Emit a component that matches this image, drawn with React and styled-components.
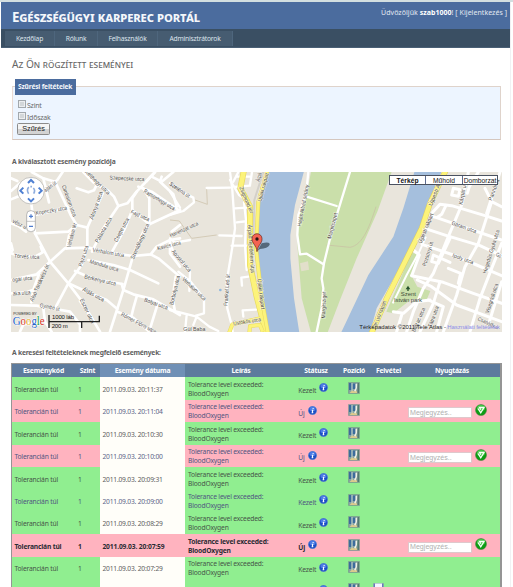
import React from "react";
import styled, { createGlobalStyle, css } from "styled-components";

const Global = createGlobalStyle`
  * { box-sizing: border-box; }
  html, body { margin: 0; height: 587px; overflow: hidden; background: #fff; }
  body { font-family: "Noto Sans", "Open Sans", sans-serif; font-size: 6.7px; color: #5c5c5c; }
`;

const Page = styled.div`
  width: 513px;
  height: 587px;
  overflow: hidden;
  padding: 0 2px 0 1px;
  background: linear-gradient(#d3dfe0, #d3dfe0) 0 0 / 100% 2px no-repeat, #fff;
`;
const Sheet = styled.div`
  margin-top: 2px;
  height: 585px;
  border-right: 1px solid #f1f1f4;
`;
const Header = styled.header`
  height: 27px;
  background: #4b6c9e;
  display: flex;
  justify-content: space-between;
  padding: 0 3px 0 11px;
  color: #f4f7fb;
`;
const SiteTitle = styled.h1`
  margin: 5px 0 0;
  font-size: 13.3px;
  line-height: 20px;
  font-weight: 700;
  font-variant: small-caps;
  letter-spacing: -0.12px;
  white-space: nowrap;
`;
const Login = styled.div`
  margin-top: 6px;
  font-size: 7px;
  line-height: 10px;
  letter-spacing: 0.04px;
  white-space: nowrap;
  color: #e3e9f2;
  b { color: #fff; }
`;
const Nav = styled.nav`
  height: 19px;
  background: #3a4f63;
  border-bottom: 1px solid #4a6076;
  padding: 2px 4px 2px;
  display: flex;
`;
const NavItem = styled.a`
  width: ${(p) => p.$w}px;
  height: 15px;
  line-height: 16px;
  text-align: center;
  background: #465c71;
  border-right: 1px solid #4e667d;
  color: #dde4ec;
  font-size: 6.7px;
  letter-spacing: -0.19px;
`;
const Main = styled.main`
  padding: 0 9px 0 10px;
`;
const PageTitle = styled.h2`
  margin: 8px 0 0;
  height: 17px;
  line-height: 17px;
  padding-left: 1px;
  font-size: 10.1px;
  font-weight: 400;
  font-variant: small-caps;
  letter-spacing: 0.02px;
  color: #666;
  white-space: nowrap;
`;
const Filter = styled.section`
  margin: 13px 0 0 1px;
  height: 54px;
  border: 1px solid #dfd3cb;
  border-left-color: #eadbd3;
  border-bottom-color: #d5c7bf;
  background: #edf5ff;
  padding-left: 2px;
`;
const Legend = styled.div`
  width: 61px;
  height: 16px;
  margin-top: -8px;
  background: #4b6c9e;
  color: #f3f6fa;
  font-weight: 700;
  font-size: 6.6px;
  line-height: 16px;
  padding-left: 3px;
  letter-spacing: -0.15px;
  white-space: nowrap;
`;
const CheckLine = styled.label`
  display: flex;
  align-items: center;
  height: 12px;
  padding-left: 3px;
  gap: 1px;
  font-size: 7px;
  letter-spacing: -0.25px;
  color: #6c6c6c;
`;
const CheckBox = styled.span`
  width: 8px;
  height: 8px;
  margin-top: -2px;
  border: 1px solid #a2a8ad;
  background: #d3d7d9;
  box-shadow: inset 0 0 0 1px #eceeef;
`;
const FilterBlock = styled.div`
  padding-top: 4px;
`;
const FilterButton = styled.button`
  display: block;
  margin-left: 2px;
  padding: 0;
  width: 33px;
  height: 12px;
  border: 1px solid #8b8b8b;
  border-radius: 1.5px;
  background: linear-gradient(#f4f4f4 45%, #d3d3d3 55%);
  font: 7.3px/10px "Liberation Sans", sans-serif;
  color: #222;
`;
const Caption = styled.div`
  height: 10px;
  line-height: 10px;
  padding-left: 1px;
  margin-top: ${(p) => p.$top}px;
  font-weight: 700;
  font-size: 6.7px;
  letter-spacing: ${(p) => p.$track}px;
  white-space: nowrap;
  color: #606060;
`;
const MapBox = styled.div`
  position: relative;
  margin-top: 5px;
  width: 491px;
  height: 160px;
  overflow: hidden;
  background: #e9e5dc;
`;
const MapSvg = styled.svg`
  display: block;
  text { font-family: "Liberation Sans", sans-serif; }
`;
const MapTypes = styled.div`
  position: absolute;
  right: 4px;
  top: 3px;
  display: flex;
  border: 1px solid #4b5260;
  background: #fff;
  height: 10px;
`;
const MapType = styled.span`
  width: ${(p) => p.$w}px;
  font: ${(p) => (p.$on ? 700 : 400)} 6.7px/9px "Liberation Sans", sans-serif;
  text-align: center;
  color: #111;
  border-right: ${(p) => (p.$last ? "0" : "1px solid #5c6b8f")};
`;
const Table = styled.div`
  margin-top: 5px;
  width: 491px;
  border: 1px solid #959595;
  border-right-width: 2px;
`;
const columns = css`
  display: grid;
  grid-template-columns: 63px 25px 85px 112px 38px 38px 31px 96px;
`;
const HeadRow = styled.div`
  ${columns};
  height: 13.4px;
  background: #5d7b9d;
`;
const HeadCell = styled.div`
  text-align: center;
  color: #fff;
  font-weight: 700;
  font-size: 6.8px;
  line-height: 14px;
  letter-spacing: -0.2px;
  background: ${(p) => (p.$sorted ? "#7090b6" : "transparent")};
`;
const rowColors = { green: "#90ee90", pink: "#ffb3bf" };
const Row = styled.div`
  ${columns};
  height: ${(p) => p.$h}px;
  background: ${(p) => rowColors[p.$tone]};
  color: ${(p) => (p.$bold ? "#2b2b33" : p.$alt ? "#4f5580" : "#465448")};
  font-weight: ${(p) => (p.$bold ? 700 : 400)};
  letter-spacing: -0.17px;
  white-space: nowrap;
`;
const Cell = styled.div`
  display: flex;
  align-items: center;
  padding-left: ${(p) => p.$pad ?? 2.4}px;
  padding-top: 2px;
  min-width: 0;
`;
const DateCell = styled(Cell)`
  background: ${(p) => (p.$bold ? "transparent" : "#fffef9")};
  color: ${(p) => (p.$bold ? "inherit" : p.$alt ? "#5b6488" : "#5d5d5d")};
  letter-spacing: ${(p) => (p.$bold ? -0.13 : -0.2)}px;
`;
const Description = styled(Cell)`
  line-height: 9px;
  padding-top: 1px;
`;
const StatusCell = styled(Cell)`
  align-items: flex-start;
  padding-top: 6.8px;
  gap: 3px;
  line-height: 13px;
  svg { margin-top: -0.8px; flex: none; }
`;
const IconCell = styled(Cell)`
  align-items: flex-start;
  padding-top: 4.5px;
`;
const Note = styled.input`
  width: 64px;
  height: 11px;
  margin-top: 3.5px;
  border: 1px solid #dfc8cc;
  padding: 0 0 0 1px;
  background: #fff;
  font: 7.1px/9px "Liberation Sans", sans-serif;
  outline: 0;
  &::placeholder { color: #b0b0b0; opacity: 1; }
`;
const AckCell = styled(Cell)`
  align-items: flex-start;
  padding: 4px 0 0 4px;
  gap: 2.5px;
`;

const InfoIcon = () => (
  <svg width="9" height="9" viewBox="0 0 18 18">
    <circle cx="9" cy="9" r="8.4" fill="#1c4fc4" stroke="#6b91d5" />
    <ellipse cx="9" cy="6" rx="6" ry="4.4" fill="#4c7ce6" />
    <path d="M9.4 3.8h2.1l-.4 2.2H9zM7.6 7.3h3.3l-1.1 5.4h1l-.4 1.7H7.1L8.2 9h-.9z" fill="#fff" />
  </svg>
);
const PositionIcon = () => (
  <svg width="12" height="12" viewBox="0 0 24 24">
    <path d="M1 1h22v22H1z" fill="#86a3a0" stroke="#6f8c86" />
    <path d="M2 2h5v14H2zM9 3h6v11H9z" fill="#3c6c9c" />
    <path d="M7 2h2v16H7z" fill="#c4d4cc" />
    <path d="M3 22l5-5 5 2 2-5 4 8z" fill="#dcca8c" />
    <path d="M15 4l4-1-1 9-3 7-3-1 3-6z" fill="#f0f0e6" />
    <path d="M20.500 2v20" stroke="#54796f" strokeWidth="3" />
  </svg>
);
const OkIcon = () => (
  <svg width="12" height="12" viewBox="0 0 24 24">
    <circle cx="12" cy="12" r="11" fill="#0d9d14" stroke="#477d43" />
    <ellipse cx="12" cy="8" rx="8" ry="6" fill="#46c848" />
    <path d="M6 9l5.500 8.500L18 7H9l2.500 4.500" fill="none" stroke="#f6fff5" strokeWidth="2.600" />
  </svg>
);
const RecordIcon = () => (
  <svg width="11" height="12" viewBox="0 0 22 24">
    <path d="M1 1h20v22H1z" fill="#6879bd" stroke="#8c91b3" />
    <path d="M4 1h14v11H4z" fill="#f5f6ff" />
  </svg>
);

/* Street geometry; every sheet is drawn at three units per pixel. */
const westRoads = [
  "M188 21L172 45L128 78M130 40L165 50L188 98L212 150L230 180",
  "M33 103L60 92L92 100L105 205L150 290L205 355L245 408L300 500",
  "M95 21L130 40L147 112M33 78L60 55M33 40L52 48",
  "M230 70L265 82L282 76L292 55",
  "M250 21L280 52L325 78L342 95L355 123L382 115L410 80L440 48L465 21",
  "M355 123L310 190L276 260",
  "M308 85L262 188L262 245L245 300L205 355L165 430",
  "M230 180L262 188M230 180L207 212L200 250",
  "M105 205L205 200L230 180M105 150L180 133L212 122",
  "M150 290L195 250L265 248L340 265L400 273L452 268L470 245L510 225L540 220",
  "M265 285L340 300L390 315L475 355",
  "M225 318L280 342L368 357",
  "M205 355L260 380L320 405L352 432",
  "M540 135L448 178L430 200L400 270L370 375L330 500",
  "M370 375L400 388L460 403L540 450",
  "M410 395L400 430L394 455M472 420L452 485",
  "M352 440L400 458L448 500",
  "M397 135L375 190L335 262",
  "M410 80L397 100L397 135L448 178M430 70L448 100L448 178",
  "M415 65L455 80L540 138M440 48L465 21M485 35L480 50L520 88L530 125",
  "M455 35L485 50L520 21M452 268L475 280L540 335",
  "M510 225L510 265L540 305M515 200L540 180",
  "M33 265L60 273L105 275L128 262L122 245",
  "M33 345L110 328L150 290M33 385L80 382L100 374L118 325M100 374L94 412",
  "M33 420L110 422L165 432L210 440L240 478L240 500",
  "M33 175L55 183L78 200M33 235L38 255L33 262M130 430L135 470L155 500",
  "M60 500L70 478L120 470M240 408L265 445",
  "M365 357L370 375M527 335L518 400L525 440",
];
const midRoads = [
  "M180 21L187 75L195 190L188 240L170 350L172 430L185 480L188 500",
  "M110 69L180 68M205 21L190 50M195 66L240 62M240 35L198 34",
  "M180 45L207 90L238 110M195 130L230 128M200 172L235 168M148 211L215 213M185 242L228 242",
  "M222 112L228 165L225 240L230 315M246 21L240 60M235 335L214 338L216 362",
  "M0 80L30 128M0 55L50 88L70 98L72 112L40 138L0 150",
  "M0 220L15 233L60 225M0 235L10 260L50 310L60 322L58 378M25 320L62 350L102 400L102 445L78 452",
  "M0 435L80 455L118 485L145 498M80 455L70 480M220 455L218 436L258 434M50 450L45 500",
  "M410 95L500 123M540 21L485 200L462 295L455 340L460 370L455 430L440 500",
  "M415 21L408 90L385 150L382 210L390 268L410 266L458 296",
];
const eastRoads = [
  "M278 142L300 118L335 122L435 152L485 168",
  "M272 153L290 158L305 148L318 121M290 158L485 225M254 190L320 212L420 242L485 272",
  "M246 238L340 270L410 300L485 332M215 332L310 352L400 385L485 415M232 345L275 365L350 420L485 470",
  "M385 21L365 120L325 215L280 325L250 370L220 440L200 500",
  "M415 21L388 65L382 85M455 110L415 235L375 305L350 390L310 500",
  "M435 70L455 110L485 125M480 21L440 145",
  "M330 220L295 295L275 290L280 270L330 292M325 310L362 325L355 355",
  "M220 255L238 270L215 332M160 440L190 445L230 410L270 405M185 450L170 500",
  "M485 235L455 310L420 400L390 500M485 350L445 480M265 405L310 425L290 500",
  "M340 70L360 74L355 94L335 90Z M300 350L280 415L240 500",
];
const westLabels = [
  ["Szépecske utca", 381, 41, 3, 104], ["Cimbalom utca", 207, 108, 70, 100], ["Kopeczky utca", 154, 137, -10, 95],
  ["Kelthegyi utca", 292, 52, 44, 98], ["Áfonya utca", 289, 122, -70, 88], ["Pálánta utca", 311, 195, -60, 85],
  ["Csejte utca", 365, 195, -62, 80], ["Fajd utca", 420, 152, 25, 60], ["Vérhalom tér", 216, 211, -75, 75],
  ["Vérhalom utca", 325, 263, 10, 96], ["Szemlőhegy utca", 420, 230, -66, 115], ["Mandula utca", 312, 302, 17, 90],
  ["Pajza utca", 251, 273, -72, 65], ["Törvés utca", 80, 275, 3, 76], ["ogár utca", 67, 342, -6, 60],
  ["Alsó Törökvész út", 119, 354, -66, 120], ["aka utca", 65, 385, -4, 53], ["Berkenye utca", 300, 346, 13, 97],
  ["Áldás utca", 280, 389, 28, 72], ["Eszter utca", 261, 438, 64, 80], ["Gyimbó út", 149, 427, 12, 60],
  ["Bolyai utca", 468, 417, 20, 74], ["Rómer Flóris utca", 416, 475, 28, 118], ["Rapsonhegyi utca", 478, 105, 31, 106],
  ["Kavics utca", 507, 242, -14, 72], ["Szere", 524, 66, 36, 35], ["vész u", 58, 178, 28, 45], ["ajtán út", 151, 65, -37, 42],
];
const midLabels = [
  ["Szeréna út", 29, 75, 34, 70], ["Harienzat utca", 42, 194, -24, 92],
  ["Apostol utca", 34, 288, 50, 80], ["Verhalom utca", 72, 372, 44, 92], ["Borbolya utca", 15, 376, -77, 90],
  ["Frankel Leó út", 171, 375, -86, 95], ["Gül Baba", 73, 492, 0, 66], ["Zsigmond tér", 229, 105, 67, 85],
  ["Árpád fejedelem útja", 243, 251, 86, 145], ["Újlaki rakpart", 280, 67, -75, 88], ["Árpá", 267, 37, -75, 27],
  ["Újlaki rakpart", 273, 387, 83, 92], ["Üstökös utca", 231, 470, -9, 84], ["Hajós Alfréd sétány", 400, 122, -79, 127],
  ["Margitsziget", 488, 183, -76, 80], ["Margitsziget", 462, 420, -88, 80],
];
const eastLabels = [
  ["Újpesti Alsó", 288, 80, -68, 90], ["Újpesti rakpart", 258, 190, -68, 96], ["Kárpát u", 368, 90, -79, 60],
  ["Pannónia", 462, 75, -70, 67], ["Garam utca", 372, 187, 20, 78], ["Pozsonyi út", 264, 267, -73, 76],
  ["Ipoly utca", 369, 282, 20, 66], ["Hegedűs Gyula utca", 454, 260, -73, 135], ["Go", 476, 271, 20, 16],
  ["Visegrádi utca", 456, 400, -72, 92], ["Balzac utca", 236, 465, -66, 78], ["Tátra utca", 281, 455, -70, 66],
  ["Csanády u", 444, 475, 25, 66], ["Carl Lutz rakpart", 118, 450, -68, 90],
];
const Labels = ({ items }) =>
  items.map(([name, x, y, angle, len], i) => (
    <text key={i} transform={`translate(${x} ${y}) rotate(${angle})`} textAnchor="middle" dy="5"
      textLength={len} lengthAdjust="spacingAndGlyphs" fontSize="17" fill="#4e4c48"
      stroke="#fff" strokeWidth="3" strokeOpacity=".6" paintOrder="stroke">{name}</text>
  ));
const Roads = ({ items, width }) => (
  <g fill="none" stroke="#fff" strokeLinejoin="round" strokeLinecap="round" strokeWidth={width}>
    {items.map((d, i) => <path key={i} d={d} />)}
  </g>
);
const sheetAt = (x) => `translate(${x} 165) scale(.33333)`;

const CityMap = () => (
  <MapSvg width="491" height="160" viewBox="11 172 491 160">
    <g transform={sheetAt(170)}>
      <path d="M294 15H403L375 120L361 210V280L372 400L389 510H300L270 370L260 250L268 110Z" fill="#a5bfdd" />
      <path d="M424 15H667L622 140L560 280L510 405L470 510H425L395 400L382 240L387 150L410 90Z" fill="#cadfaa" />
      <path d="M390 295l24-6 3 25-23 5z" fill="#e2dfca" />
      <path d="M0 165L28 168L65 220L140 210M75 105L112 118L110 72M470 240L540 247C580 240 600 180 618 125" fill="none" stroke="#c9bda3" strokeWidth="2" />
      <circle cx="151" cy="375" r="4" fill="#8fb8de" />
    </g>
    <g transform={sheetAt(340)}>
      <path d="M225 15H306L275 105L230 215L170 325L110 430L88 510H0L85 330L160 215L190 130Z" fill="#a5bfdd" />
      <path d="M213 262L237 270L216 335L232 365L271 378L260 404L215 402L160 445L139 440L180 345Z" fill="#cadfaa" />
    </g>
    <g transform={sheetAt(0)}><Roads items={westRoads} width={8} /></g>
    <g transform={sheetAt(170)}>
      <Roads items={midRoads} width={7} />
      <g fill="none" strokeLinejoin="round">
        <path d="M282 15L253 105L247 300L285 500" stroke="#d3d0ca" strokeWidth="6" />
        <path d="M222 15L211 70L240 125L240 300L260 395L290 510" stroke="#e8d95f" strokeWidth="18" />
        <path d="M222 15L211 70L240 125L240 300L260 395L290 510" stroke="#fcf37a" strokeWidth="14" />
        <path d="M293 15L265 110L258 250L275 400L295 510M175 510L187 478L270 460M238 505L240 483L270 480L278 500" stroke="#e8d95f" strokeWidth="12" />
        <path d="M293 15L265 110L258 250L275 400L295 510M175 510L187 478L270 460M238 505L240 483L270 480L278 500" stroke="#fcf37a" strokeWidth="9" />
      </g>
    </g>
    <g transform={sheetAt(340)}>
      <Roads items={eastRoads} width={9} />
      <path d="M318 15L270 115L245 190L190 300L140 400L92 510" fill="none" stroke="#dccd60" strokeWidth="17" />
      <path d="M318 15L270 115L245 190L190 300L140 400L92 510" fill="none" stroke="#fcf37a" strokeWidth="14" />
      <path d="M258 215L238 260L200 330L158 415" fill="none" stroke="#fff" strokeWidth="6" />
      <Labels items={eastLabels} />
      <path d="M204 362l-7 11h5v5h4v-5h5z" fill="#27532c" />
      <g fontSize="18" fill="#3e4d3b" textAnchor="middle">
        <text x="205" y="392">Szent</text>
        <text x="204" y="412" textLength="84">István park</text>
      </g>
      <text x="58" y="491" fontSize="18" fill="#222" textLength="260">Térképadatok ©2011 Tele Atlas -</text>
      <text x="322" y="491" fontSize="18" fill="#8d8de8" textLength="157">Használati feltételek</text>
    </g>
    <g transform={sheetAt(0)}>
      <Labels items={westLabels} />
      <text x="40" y="451" fontSize="11" fill="#333" textLength="70">POWERED BY</text>
      <text x="38" y="481" fontSize="37" textLength="96" lengthAdjust="spacingAndGlyphs" style={{ fontFamily: "Liberation Serif, serif" }} stroke="#fff" strokeWidth="3" paintOrder="stroke">
        <tspan fill="#2462c9">G</tspan><tspan fill="#d62d20">o</tspan><tspan fill="#e9ad16">o</tspan><tspan fill="#2462c9">g</tspan><tspan fill="#149c45">l</tspan><tspan fill="#d62d20">e</tspan>
      </text>
      <path d="M147 450V489M147 470H298M298 452V472M245 470V489" fill="none" stroke="#222" strokeWidth="4" />
      <text x="156" y="461" fontSize="18" fill="#111" textLength="66">1000 láb</text>
      <text x="155" y="489" fontSize="18" fill="#111" textLength="48">200 m</text>
      <circle cx="93" cy="77" r="40" fill="#fff" stroke="#aaa9a6" strokeWidth="2" />
      <path d="M84 54l9-9 9 9M84 100l9 9 9-9M70 68l-9 9 9 9M116 68l9 9-9 9" fill="none" stroke="#4f80d2" strokeWidth="6" />
      <path d="M86 86c-5-6-5-16 1-19M91 65h5M100 69c5 5 4 12 1 17" fill="none" stroke="#8eadde" strokeWidth="5" />
      <rect x="80" y="137" width="26" height="63" rx="12" fill="#fff" stroke="#999" strokeWidth="2" />
      <path d="M80 169h26" stroke="#aaa" strokeWidth="2" />
      <path d="M87 154h12M93 148v12M87 184h12" stroke="#4f7ccd" strokeWidth="3.5" />
    </g>
    <g transform={sheetAt(170)}>
      <Labels items={midLabels} />
      <path d="M262 258L275 235Q300 228 299 239Q293 250 270 252Z" fill="#293947" opacity=".65" />
      <path d="M261 260C259 239 245 235 246 221A15 15 0 0 1 276 221C277 235 264 239 261 260Z" fill="#f46352" stroke="#61231d" strokeWidth="2" />
      <circle cx="261" cy="222" r="5" fill="#291412" />
    </g>
  </MapSvg>
);

const menu = [["Kezdőlap", 50], ["Rólunk", 43], ["Felhasználók", 60], ["Adminisztrátorok", 75]];
const heads = ["Eseménykód", "Szint", "Esemény dátuma", "Leírás", "Státusz", "Pozíció", "Felvétel", "Nyugtázás"];
const exceeded = ["Tolerance level exceeded:", "BloodOxygen"];
const events = [
  { date: "2011.09.03. 20:11:37" },
  { date: "2011.09.03. 20:11:04", fresh: true },
  { date: "2011.09.03. 20:10:30" },
  { date: "2011.09.03. 20:10:00", fresh: true },
  { date: "2011.09.03. 20:09:31" },
  { date: "2011.09.03. 20:09:00" },
  { date: "2011.09.03. 20:08:29" },
  { date: "2011.09.03. 20:07:59", fresh: true, selected: true },
  { date: "2011.09.03. 20:07:29" },
  { date: "2011.09.03. 20:07:01", lines: ["Device not detected: di"], record: true, h: 19 },
];

function EventRow({ event, alt }) {
  const { date, fresh, selected, record, lines = exceeded, h = 22.4 } = event;
  return (
    <Row $tone={fresh ? "pink" : "green"} $bold={selected} $alt={alt} $h={h}>
      <Cell>Tolerancián túl</Cell>
      <Cell $pad={3}>1</Cell>
      <DateCell $bold={selected} $alt={alt}>{date}</DateCell>
      <Description $pad={3}><div>{lines.map((l) => <div key={l}>{l}</div>)}</div></Description>
      <StatusCell $pad={1.3}>{fresh ? "Új" : "Kezelt"}<InfoIcon /></StatusCell>
      <IconCell $pad={13}><PositionIcon /></IconCell>
      <IconCell $pad={0}>{record && <RecordIcon />}</IconCell>
      <AckCell>{fresh && <><Note placeholder="Megjegyzés.." /><OkIcon /></>}</AckCell>
    </Row>
  );
}

export default function App() {
  return (
    <Page>
      <Global />
      <Sheet>
        <Header>
          <SiteTitle>Egészségügyi karperec portál</SiteTitle>
          <Login>Üdvözöljük <b>szab1000</b>! [ Kijelentkezés ]</Login>
        </Header>
        <Nav>{menu.map(([name, w]) => <NavItem key={name} $w={w}>{name}</NavItem>)}</Nav>
        <Main>
          <PageTitle>Az Ön rögzített eseményei</PageTitle>
          <Filter>
            <Legend>Szűrési feltételek</Legend>
            <FilterBlock>
              <CheckLine><CheckBox />Szint</CheckLine>
              <CheckLine><CheckBox />Időszak</CheckLine>
              <FilterButton>Szűrés</FilterButton>
            </FilterBlock>
          </Filter>
          <Caption $top={17} $track={-0.16}>A kiválasztott esemény pozíciója</Caption>
          <MapBox>
            <CityMap />
            <MapTypes>
              <MapType $w={36} $on>Térkép</MapType>
              <MapType $w={37}>Műhold</MapType>
              <MapType $w={34} $last>Domborzat</MapType>
            </MapTypes>
          </MapBox>
          <Caption $top={16} $track={-0.2}>A keresési feltételeknek megfelelő események:</Caption>
          <Table>
            <HeadRow>
              {heads.map((name, i) => <HeadCell key={name} $sorted={i === 2}>{name}</HeadCell>)}
            </HeadRow>
            {events.map((e, i) => <EventRow key={e.date} event={e} alt={i % 2 === 1} />)}
          </Table>
        </Main>
      </Sheet>
    </Page>
  );
}
